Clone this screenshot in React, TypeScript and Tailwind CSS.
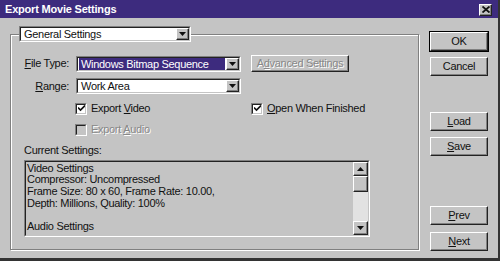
import React from "react";

const font = { fontFamily: '"Liberation Sans", Arial, sans-serif' };

function Raised({ className = "", children }: { className?: string; children?: React.ReactNode }) {
  return (
    <div
      className={
        "flex items-center justify-center bg-[#c4c4c4] border border-t-white border-l-white border-r-[#222] border-b-[#222] shadow-[inset_-1px_-1px_0_#808080] " +
        className
      }
    >
      {children}
    </div>
  );
}

function Btn({ children, def = false }: { children: React.ReactNode; def?: boolean }) {
  return (
    <div className={def ? "border border-black" : "border border-transparent"}>
      <Raised className="h-[19px] w-[58px] text-[11px] text-[#111]">{children}</Raised>
    </div>
  );
}

function Arrow({ up = false }: { up?: boolean }) {
  return (
    <svg width="7" height="4" viewBox="0 0 7 4">
      {up ? <path d="M3.5 0 L7 4 L0 4 Z" fill="#111" /> : <path d="M0 0 L7 0 L3.5 4 Z" fill="#111" />}
    </svg>
  );
}

function Select({ text, highlight = false, w }: { text: string; highlight?: boolean; w: string }) {
  return (
    <div className={"flex h-[16px] border border-t-[#808080] border-l-[#808080] border-r-white border-b-white " + w}>
      <div className="flex flex-1 border border-t-[#222] border-l-[#222] border-r-[#c4c4c4] border-b-[#c4c4c4] bg-white">
        <div className="flex flex-1 items-center px-[1px]">
          <span
            className={
              "px-[2px] text-[11px] leading-[12px] " +
              (highlight ? "flex-1 bg-[#3d2b7e] text-white" : "text-[#111]")
            }
          >
            {text}
          </span>
        </div>
        <Raised className="w-[13px]">
          <Arrow />
        </Raised>
      </div>
    </div>
  );
}

function Check({ checked, disabled = false }: { checked: boolean; disabled?: boolean }) {
  return (
    <div className="h-[12px] w-[12px] border border-t-[#808080] border-l-[#808080] border-r-white border-b-white">
      <div
        className={
          "flex h-full w-full items-center justify-center border border-t-[#222] border-l-[#222] border-r-[#c4c4c4] border-b-[#c4c4c4] " +
          (disabled ? "bg-[#c4c4c4]" : "bg-white")
        }
      >
        {checked && (
          <svg width="7" height="7" viewBox="0 0 7 7">
            <path d="M0 2.5 L2.5 5 L7 0.5" stroke="#111" strokeWidth="1.6" fill="none" />
          </svg>
        )}
      </div>
    </div>
  );
}

export default function App() {
  return (
    <div
      style={font}
      className="h-[261px] w-[500px] overflow-hidden bg-[#c4c4c4] border-r-2 border-b-[3px] border-r-[#333] border-b-[#333] text-[#111] tracking-[-0.3px]"
    >
      <div className="flex h-[18px] items-center justify-between bg-[#3d2b7e] pl-[5px] pr-[6px]">
        <span className="text-[11px] font-bold tracking-[-0.2px] text-white">Export Movie Settings</span>
        <Raised className="mt-[1px] h-[12px] w-[13px]">
          <svg width="8" height="7" viewBox="0 0 8 7">
            <path d="M0.5 0.5 L7.5 6.5 M7.5 0.5 L0.5 6.5" stroke="#111" strokeWidth="1.8" />
          </svg>
        </Raised>
      </div>
      <div className="flex">
        <fieldset className="ml-[10px] mt-[8px] h-[224px] w-[409px] border border-[#808080] pl-[13px] pr-0 shadow-[inset_1px_1px_0_white,1px_1px_0_white]">
          <legend className="ml-[-5px] p-0">
            <Select text="General Settings" w="w-[172px]" />
          </legend>
          <div className="mt-[13px] flex items-center">
            <div className="w-[45px] text-right text-[11px]">
              <span className="underline">F</span>ile Type:
            </div>
            <div className="ml-[7px]">
              <Select text="Windows Bitmap Sequence" highlight w="w-[165px]" />
            </div>
            <Raised className="ml-[10px] h-[17px] w-[98px] text-[11px] text-[#888] [text-shadow:1px_1px_0_#fff]">
              <span>
                A<span className="underline">d</span>vanced Settings
              </span>
            </Raised>
          </div>
          <div className="mt-[6px] flex items-center">
            <div className="w-[45px] text-right text-[11px]">
              <span className="underline">R</span>ange:
            </div>
            <div className="ml-[7px]">
              <Select text="Work Area" w="w-[165px]" />
            </div>
          </div>
          <div className="mt-[8px] flex h-[12px] items-center">
            <div className="ml-[51px] flex w-[176px] items-center">
              <Check checked />
              <span className="ml-[4px] text-[11px]">
                Export <span className="underline">V</span>ideo
              </span>
            </div>
            <div className="flex items-center">
              <Check checked />
              <span className="ml-[4px] text-[11px]">
                <span className="underline">O</span>pen When Finished
              </span>
            </div>
          </div>
          <div className="mt-[9px] flex h-[12px] items-center">
            <div className="ml-[51px] flex items-center">
              <Check checked={false} disabled />
              <span className="ml-[4px] text-[11px] text-[#888] [text-shadow:1px_1px_0_#fff]">
                Export <span className="underline">A</span>udio
              </span>
            </div>
          </div>
          <div className="mt-[8px] text-[11px] leading-[13px]">Current Settings:</div>
          <div className="mt-[3px] flex h-[77px] w-[346px] border border-t-[#808080] border-l-[#808080] border-r-white border-b-white">
            <div className="flex flex-1 border border-t-[#222] border-l-[#222] border-r-[#c4c4c4] border-b-[#c4c4c4]">
              <div className="flex-1 pl-[1px] pt-[1px] text-[11px] leading-[11.8px]">
                <div>Video Settings</div>
                <div>Compressor: Uncompressed</div>
                <div>Frame Size: 80 x 60, Frame Rate: 10.00,</div>
                <div>Depth: Millions, Quality: 100%</div>
                <div>&nbsp;</div>
                <div>Audio Settings</div>
              </div>
              <div className="flex w-[15px] flex-col">
                <Raised className="h-[14px]">
                  <Arrow up />
                </Raised>
                <Raised className="h-[16px]" />
                <div className="flex-1 bg-[#e2e2e2]" />
                <Raised className="h-[14px]">
                  <Arrow />
                </Raised>
              </div>
            </div>
          </div>
        </fieldset>
        <div className="ml-[10px] mt-[13px] flex flex-col">
          <Btn def>OK</Btn>
          <div className="mt-[4px]">
            <Btn>Cancel</Btn>
          </div>
          <div className="mt-[34px]">
            <Btn>
              <span>
                <span className="underline">L</span>oad
              </span>
            </Btn>
          </div>
          <div className="mt-[4px]">
            <Btn>
              <span>
                <span className="underline">S</span>ave
              </span>
            </Btn>
          </div>
          <div className="mt-[48px]">
            <Btn>
              <span>
                <span className="underline">P</span>rev
              </span>
            </Btn>
          </div>
          <div className="mt-[5px]">
            <Btn>
              <span>
                <span className="underline">N</span>ext
              </span>
            </Btn>
          </div>
        </div>
      </div>
    </div>
  );
}
